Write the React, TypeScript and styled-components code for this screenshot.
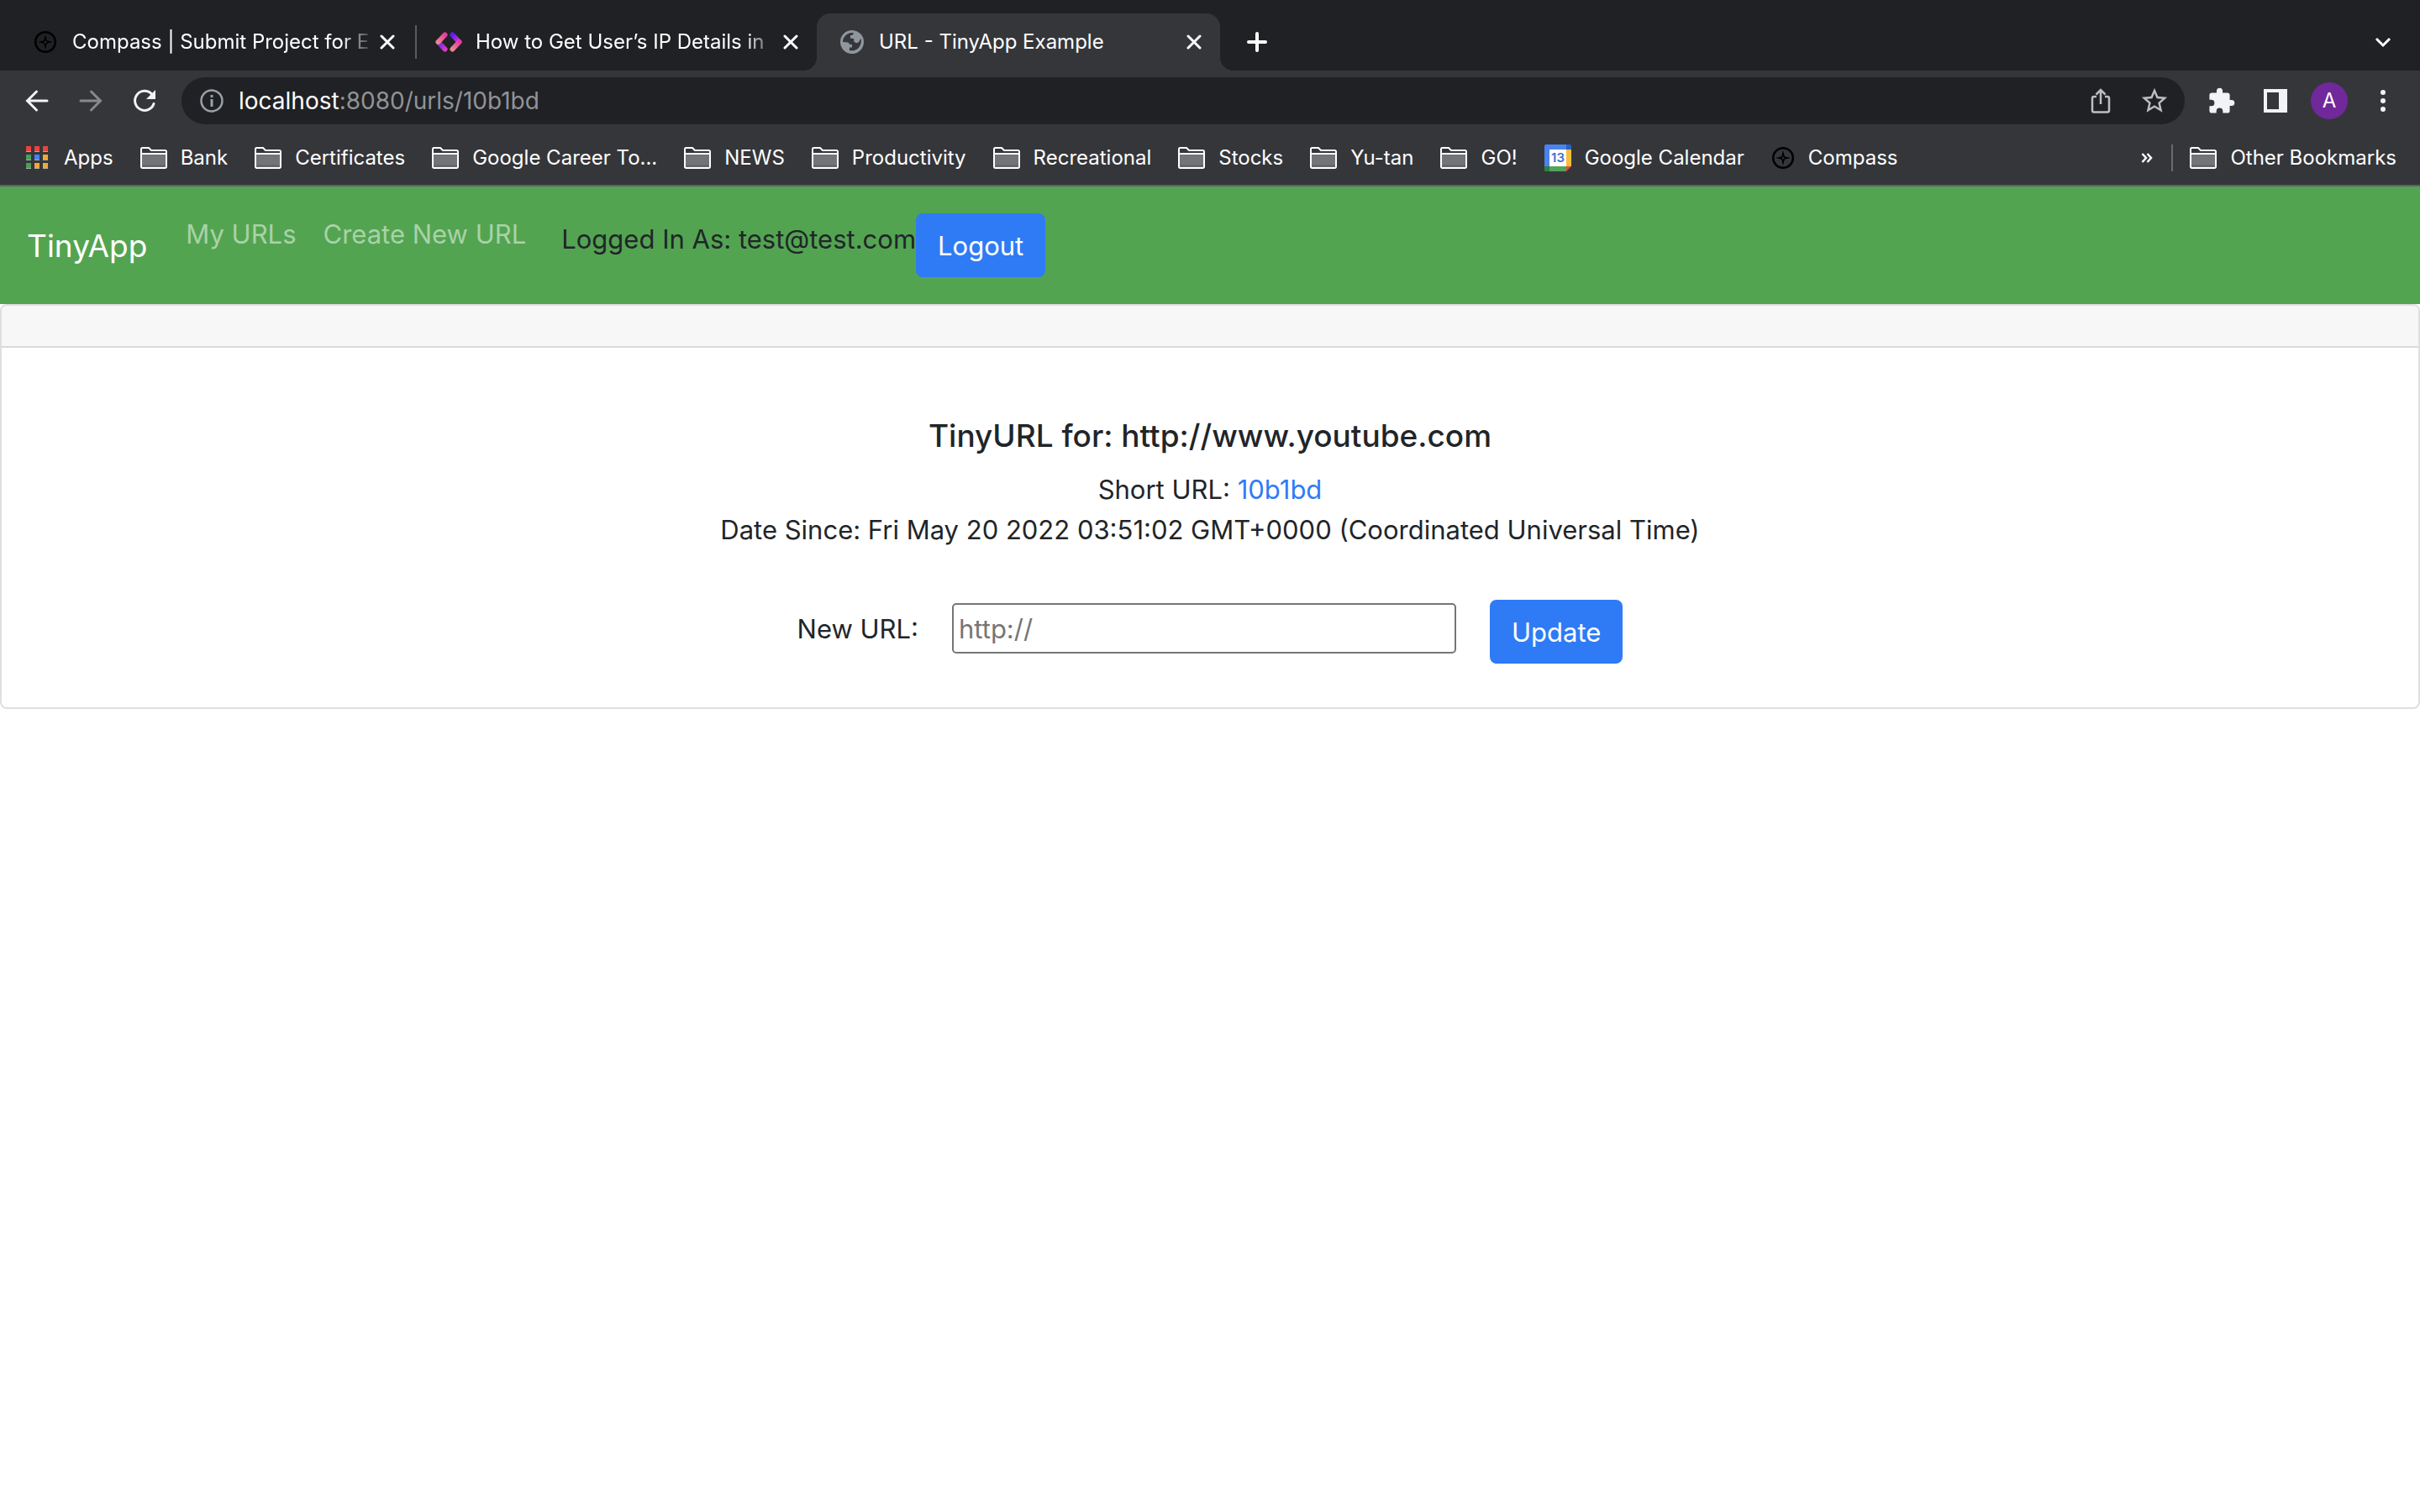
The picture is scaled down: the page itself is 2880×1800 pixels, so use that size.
import React from 'react';
import styled, { createGlobalStyle } from 'styled-components';

const Global = createGlobalStyle`
  *, *::before, *::after { box-sizing: border-box; }
  body { margin: 0; background: #fff; color: #212529; font-family: Inter, "Liberation Sans", sans-serif; font-size: 31px; line-height: 48px; }
  button, input { font-family: inherit; margin: 0; }
  a { text-decoration: none; }
  svg { display: block; flex: none; }
`;

const Chrome = styled.div`
  background: #35363a;
  color: #fff;
  border-bottom: 2px solid #606165;
`;

const TabStrip = styled.div`
  display: flex;
  align-items: center;
  height: 84px;
  padding: 16px 28px 0 12px;
  background: #202124;
`;

const Tab = styled.div<{ $active?: boolean }>`
  position: relative;
  display: flex;
  align-items: center;
  width: 480px;
  height: 68px;
  padding: 0 22px 0 28px;
  border-radius: 16px 16px 0 0;
  background: ${(p) => (p.$active ? '#35363a' : 'transparent')};
  ${(p) =>
    p.$active &&
    `&::before, &::after {
      content: ''; position: absolute; bottom: 0; width: 16px; height: 16px;
    }
    &::before { left: -16px; background: radial-gradient(circle at 0 0, transparent 16px, #35363a 16px); }
    &::after { right: -16px; background: radial-gradient(circle at 100% 0, transparent 16px, #35363a 16px); }`}
`;

const Favicon = styled.span`
  display: flex;
  justify-content: center;
  flex: none;
  width: 28px;
  margin-right: 18px;
`;

const TabTitle = styled.span<{ $fade?: boolean }>`
  flex: 1;
  min-width: 0;
  margin-right: 6px;
  white-space: nowrap;
  font-size: 24px;
  line-height: 32px;
  color: #fff;
  ${(p) => p.$fade && 'mask-image: linear-gradient(to right, #000 calc(100% - 40px), transparent 100%);'}
`;

const IconButton = styled.button`
  display: flex;
  align-items: center;
  justify-content: center;
  flex: none;
  padding: 0;
  border: 0;
  background: none;
  color: #f1f3f4;
`;

const TabDivider = styled.span`
  width: 2px;
  height: 40px;
  margin: 0 -4px 0 2px;
  background: #5b5c60;
`;

const NewTab = styled(IconButton)`
  margin: 0 auto 0 32px;
`;

const Toolbar = styled.div`
  display: flex;
  align-items: center;
  height: 72px;
  padding: 0 28px;
`;

const NavButtons = styled.div`
  display: flex;
  gap: 32px;
  margin-right: 28px;
`;

const Omnibox = styled.div`
  display: flex;
  align-items: center;
  flex: 1;
  height: 56px;
  padding: 0 20px 0 22px;
  border-radius: 28px;
  background: #202124;
`;

const Address = styled.div`
  flex: 1;
  margin-left: 18px;
  font-size: 28px;
  line-height: 36px;
  color: #919397;
`;

const Host = styled.span`
  color: #fff;
`;

const OmniActions = styled.div`
  display: flex;
  gap: 32px;
`;

const ToolbarActions = styled.div`
  display: flex;
  align-items: center;
  margin-left: 28px;
  gap: 32px;
`;

const Avatar = styled.button`
  width: 44px;
  height: 44px;
  margin: 0 -6px;
  padding: 0;
  border: 0;
  border-radius: 50%;
  background: #70289b;
  color: #fff;
  font-size: 24px;
  line-height: 44px;
  text-align: center;
`;

const BookmarksBar = styled.nav`
  display: flex;
  align-items: center;
  height: 64px;
  padding: 0 28px;
`;

const BookmarkList = styled.div`
  display: flex;
  flex: 1;
  gap: 32px;
`;

const Bookmark = styled.a`
  display: flex;
  align-items: center;
  gap: 16px;
  color: #fff;
  font-size: 24px;
  line-height: 32px;
  white-space: nowrap;
`;

const BarDivider = styled.span`
  width: 2px;
  height: 32px;
  margin: 0 20px 0 22px;
  background: #6a6b6f;
`;

const Navbar = styled.header`
  display: flex;
  align-items: flex-start;
  height: 140px;
  padding: 32px;
  background: #53a451;
`;

const Brand = styled.a`
  align-self: center;
  margin-right: 30px;
  padding-top: 2px;
  color: #fff;
  font-size: 37px;
  line-height: 60px;
`;

const NavLink = styled.a`
  padding: 1px 16px 0;
  color: #a9d2a8;
  white-space: nowrap;
`;

const Account = styled.form`
  display: flex;
  align-items: flex-start;
  margin-left: 26px;
`;

const LoggedIn = styled.span`
  padding-top: 7px;
`;

const Primary = styled.button`
  padding: 13px 24px 11px;
  border: 2px solid #2f7bf6;
  border-radius: 8px;
  background: #2f7bf6;
  color: #fff;
  font-size: 31px;
  line-height: 48px;
`;

const Card = styled.main`
  border: 2px solid #dfdfdf;
  border-radius: 8px;
  background: #fff;
  text-align: center;
`;

const CardHeader = styled.div`
  height: 50px;
  border-bottom: 2px solid #d9dada;
  border-radius: 6px 6px 0 0;
  background: #f7f7f7;
`;

const CardBody = styled.div`
  padding: 81px 40px 52px;
`;

const Title = styled.h5`
  margin: 0 0 16px;
  font-size: 37px;
  line-height: 48px;
  font-weight: 500;
`;

const Line = styled.p`
  margin: 0;
`;

const ShortLink = styled.a`
  color: #2f7bf6;
`;

const UpdateForm = styled.form`
  display: flex;
  justify-content: center;
  align-items: flex-start;
  gap: 40px;
  margin-top: 59px;
`;

const Label = styled.label`
  padding-top: 11px;
`;

const UrlInput = styled.input`
  width: 600px;
  height: 60px;
  margin-top: 4px;
  padding: 2px 6px;
  border: 2px solid #767676;
  border-radius: 5px;
  background: #fff;
  color: #212529;
  font-size: 31px;
  &::placeholder { color: #757575; opacity: 1; }
`;

const Folder = () => (
  <svg width="32" height="26" viewBox="0 0 32 26">
    <path d="M1 9h30v14.500a1.500 1.500 0 0 1-1.500 1.500h-27a1.500 1.500 0 0 1-1.500-1.500z" fill="#737477" />
    <path d="M2 21h28v3H2z" fill="#66676a" />
    <path d="M1 9V2.500A1.500 1.500 0 0 1 2.500 1h7.500l3 3h16.500A1.500 1.500 0 0 1 31 5.500V23.500a1.500 1.500 0 0 1-1.500 1.500h-27A1.500 1.500 0 0 1 1 23.500zM1 8h30" fill="none" stroke="#fff" strokeWidth="2" />
  </svg>
);

const CompassIcon = () => (
  <svg width="28" height="28" viewBox="0 0 28 28">
    <circle cx="14" cy="14" r="11.800" fill="none" stroke="#000" strokeWidth="2.500" />
    <path d="M14 5l1.800 7.200L23 14l-7.200 1.800L14 23l-1.800-7.200L5 14l7.200-1.800z" fill="#000" />
    <circle cx="14" cy="14" r="1.500" fill="#2a2b2e" />
  </svg>
);

const DiamondLogo = () => (
  <svg width="32" height="28" viewBox="0 0 32 28">
    <defs>
      <linearGradient id="pinkish" x1="1" y1="0" x2="0" y2="1">
        <stop offset="0" stopColor="#e93aa0" />
        <stop offset="1" stopColor="#e58a8a" />
      </linearGradient>
      <linearGradient id="violet" x1="0" y1="0" x2="1" y2="1">
        <stop offset="0" stopColor="#5b20f0" />
        <stop offset="1" stopColor="#d838c8" />
      </linearGradient>
    </defs>
    <g fill="none" strokeWidth="6" strokeLinecap="round">
      <path d="M3.500 14l8 8.500" stroke="url(#violet)" />
      <path d="M11.500 5.500l-8 8.500" stroke="url(#pinkish)" />
      <path d="M20.500 5.500l8 8.500" stroke="url(#violet)" />
      <path d="M28.500 14l-8 8.500" stroke="url(#pinkish)" />
    </g>
  </svg>
);

const Globe = () => (
  <svg width="28" height="28" viewBox="0 0 28 28">
    <circle cx="14" cy="14" r="14" fill="#8f969c" />
    <path
      d="M3 14c0-6 5-11 11-11l2 .2c-.3 1.600-1 2.800-2.500 2.800H12v3.500h2.500c1.300 0 2 .8 2 2s-1 2-1 2h5c2 0 2.500-3 4-3.500 1.500 6-2 13-8.500 14.300H11v-3.800h3v-3.500c-2.500 0-3.500-.5-4.500-2.500z"
      fill="#35363a"
    />
    <path d="M16 3.200c3.800.8 7 3.500 8.500 6.800-1.500.5-1.500 5-4.500 5-2 0-3-.5-3.500-2 1-1.500 0-3.500-2-3.500H12V6h1.500C15 6 15.700 4.800 16 3.200z" fill="#8f969c" />
  </svg>
);

const CloseIcon = () => (
  <svg width="18" height="18" viewBox="0 0 18 18">
    <path d="M2 2l14 14M16 2L2 16" stroke="#fff" strokeWidth="3" strokeLinecap="round" />
  </svg>
);

const Back = ({ flip }: { flip?: boolean }) => (
  <svg width="32" height="32" viewBox="0 0 32 32">
    <path
      d={flip ? 'M4 16h23M16.500 5l11 11-11 11' : 'M28 16H5M15.500 5l-11 11 11 11'}
      fill="none"
      stroke={flip ? '#88898c' : '#f1f3f4'}
      strokeWidth="3"
      strokeLinecap="round"
    />
  </svg>
);

const Reload = () => (
  <svg width="32" height="32" viewBox="0 0 32 32">
    <path d="M27 19.500A11.500 11.500 0 1 1 24.500 8" fill="none" stroke="#f1f3f4" strokeWidth="3" strokeLinecap="round" />
    <path d="M29 3v11H18z" fill="#f1f3f4" />
  </svg>
);

const Info = () => (
  <svg width="28" height="28" viewBox="0 0 28 28">
    <circle cx="14" cy="14" r="12.500" fill="none" stroke="#9aa0a6" strokeWidth="2.500" />
    <path d="M14 12V21M14 7v3" stroke="#9aa0a6" strokeWidth="3" />
  </svg>
);

const Share = () => (
  <svg width="32" height="32" viewBox="0 0 32 32">
    <path d="M11 11H8a2 2 0 0 0-2 2v14.500a2 2 0 0 0 2 2h16a2 2 0 0 0 2-2V13a2 2 0 0 0-2-2h-3M16 20V4M10.500 8.500L16 3l5.500 5.500" fill="none" stroke="#bdbec0" strokeWidth="2.500" />
  </svg>
);

const Star = () => (
  <svg width="32" height="32" viewBox="1.500 1.500 21 21">
    <path fill="#bdbec0" d="M22 9.240l-7.190-.62L12 2 9.190 8.630 2 9.240l5.460 4.730L5.820 21 12 17.270 18.180 21l-1.630-7.030L22 9.240zM12 15.400l-3.760 2.270 1-4.280-3.320-2.880 4.380-.38L12 6.100l1.710 4.040 4.380.38-3.320 2.880 1 4.280L12 15.400z" />
  </svg>
);

const Puzzle = () => (
  <svg width="32" height="32" viewBox="1 .5 22.500 22.500">
    <path fill="#f1f3f4" d="M20.500 11H19V7a2 2 0 0 0-2-2h-4V3.500a2.500 2.500 0 0 0-5 0V5H4a2 2 0 0 0-1.990 2v3.800H3.500a2.700 2.700 0 0 1 0 5.400H2V20a2 2 0 0 0 2 2h3.800v-1.500a2.700 2.700 0 0 1 5.400 0V22H17a2 2 0 0 0 2-2v-4h1.500a2.500 2.500 0 0 0 0-5z" />
  </svg>
);

const SidePanel = () => (
  <svg width="32" height="32" viewBox="0 0 32 32">
    <path fill="#f1f3f4" fillRule="evenodd" d="M2 2h28v28H2zM6 6v20h14V6z" />
  </svg>
);

const Dots = () => (
  <svg width="32" height="32" viewBox="0 0 32 32" fill="#f1f3f4">
    <circle cx="16" cy="6" r="3" />
    <circle cx="16" cy="16" r="3" />
    <circle cx="16" cy="26" r="3" />
  </svg>
);

const AppsGrid = () => (
  <svg width="32" height="28" viewBox="-3 0 32 28">
    {['#e8453c', '#e8453c', '#e8453c', '#4c9f55', '#4285f4', '#f0a932', '#4c9f55', '#f0a932', '#f0a932'].map((c, i) => (
      <g key={i}>
        <rect x={(i % 3) * 10} y={Math.floor(i / 3) * 10} width="6" height="7" fill="#a9a9a9" />
        <rect x={(i % 3) * 10} y={Math.floor(i / 3) * 10} width="6" height="6" fill={c} />
      </g>
    ))}
  </svg>
);

const CalendarIcon = () => (
  <svg width="32" height="32" viewBox="0 0 32 32">
    <path d="M2 0h24v26H0V2a2 2 0 0 1 2-2z" fill="#4b83f0" />
    <path d="M26 0h4a2 2 0 0 1 2 2v4h-6z" fill="#2463c6" />
    <path d="M26 6h6v20h-6z" fill="#f8bd3c" />
    <path d="M0 26h26v6H2a2 2 0 0 1-2-2z" fill="#52a35b" />
    <path d="M0 26h6v6H2a2 2 0 0 1-2-2z" fill="#2f8040" />
    <path d="M26 26h6l-6 6z" fill="#e2493d" />
    <path d="M6 6h20v20H6z" fill="#fff" />
    <text x="16" y="21" textAnchor="middle" fontSize="15" fontWeight="600" fill="#3c6fd0">13</text>
  </svg>
);

const folders = ['Bank', 'Certificates', 'Google Career To...', 'NEWS', 'Productivity', 'Recreational', 'Stocks', 'Yu-tan', 'GO!'];

export default function App() {
  return (
    <>
      <Global />
      <Chrome>
        <TabStrip>
          <Tab>
            <Favicon><CompassIcon /></Favicon>
            <TabTitle $fade>Compass | Submit Project for E</TabTitle>
            <IconButton aria-label="Close tab"><CloseIcon /></IconButton>
          </Tab>
          <TabDivider />
          <Tab>
            <Favicon><DiamondLogo /></Favicon>
            <TabTitle $fade>How to Get User’s IP Details in</TabTitle>
            <IconButton aria-label="Close tab"><CloseIcon /></IconButton>
          </Tab>
          <Tab $active>
            <Favicon><Globe /></Favicon>
            <TabTitle>URL - TinyApp Example</TabTitle>
            <IconButton aria-label="Close tab"><CloseIcon /></IconButton>
          </Tab>
          <NewTab aria-label="New tab">
            <svg width="24" height="24" viewBox="0 0 24 24"><path d="M12 2v20M2 12h20" stroke="#fff" strokeWidth="4" strokeLinecap="round" /></svg>
          </NewTab>
          <IconButton aria-label="Search tabs">
            <svg width="32" height="20" viewBox="0 0 32 20"><path d="M8 6l8 8 8-8" fill="none" stroke="#fff" strokeWidth="3" /></svg>
          </IconButton>
        </TabStrip>
        <Toolbar>
          <NavButtons>
            <IconButton aria-label="Back"><Back /></IconButton>
            <IconButton aria-label="Forward"><Back flip /></IconButton>
            <IconButton aria-label="Reload"><Reload /></IconButton>
          </NavButtons>
          <Omnibox>
            <Info />
            <Address><Host>localhost</Host>:8080/urls/10b1bd</Address>
            <OmniActions>
              <IconButton aria-label="Share"><Share /></IconButton>
              <IconButton aria-label="Bookmark"><Star /></IconButton>
            </OmniActions>
          </Omnibox>
          <ToolbarActions>
            <IconButton aria-label="Extensions"><Puzzle /></IconButton>
            <IconButton aria-label="Side panel"><SidePanel /></IconButton>
            <Avatar>A</Avatar>
            <IconButton aria-label="Menu"><Dots /></IconButton>
          </ToolbarActions>
        </Toolbar>
        <BookmarksBar>
          <BookmarkList>
            <Bookmark href="#"><AppsGrid />Apps</Bookmark>
            {folders.map((name) => (
              <Bookmark href="#" key={name}><Folder />{name}</Bookmark>
            ))}
            <Bookmark href="#"><CalendarIcon />Google Calendar</Bookmark>
            <Bookmark href="#"><CompassIcon />Compass</Bookmark>
          </BookmarkList>
          <IconButton aria-label="More bookmarks">
            <svg width="14" height="14" viewBox="0 0 14 14"><path d="M1.500 2l4.500 5-4.500 5M7.500 2L12 7l-4.500 5" fill="none" stroke="#fff" strokeWidth="2.500" /></svg>
          </IconButton>
          <BarDivider />
          <Bookmark href="#"><Folder />Other Bookmarks</Bookmark>
        </BookmarksBar>
      </Chrome>

      <Navbar>
        <Brand href="#">TinyApp</Brand>
        <NavLink href="#">My URLs</NavLink>
        <NavLink href="#">Create New URL</NavLink>
        <Account onSubmit={(e) => e.preventDefault()}>
          <LoggedIn>Logged In As: test@test.com</LoggedIn>
          <Primary type="submit">Logout</Primary>
        </Account>
      </Navbar>

      <Card>
        <CardHeader />
        <CardBody>
          <Title>TinyURL for: http://www.youtube.com</Title>
          <Line>Short URL: <ShortLink href="#">10b1bd</ShortLink></Line>
          <Line>Date Since: Fri May 20 2022 03:51:02 GMT+0000 (Coordinated Universal Time)</Line>
          <UpdateForm onSubmit={(e) => e.preventDefault()}>
            <Label htmlFor="longURL">New URL:</Label>
            <UrlInput id="longURL" type="text" placeholder="http://" />
            <Primary type="submit">Update</Primary>
          </UpdateForm>
        </CardBody>
      </Card>
    </>
  );
}
